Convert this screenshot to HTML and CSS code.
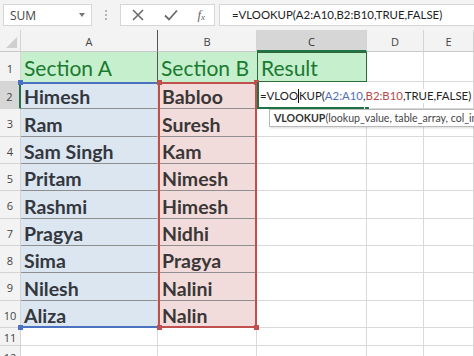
FILE: index.html
```html
<!DOCTYPE html>
<html>
<head>
<meta charset="utf-8">
<link rel="stylesheet" href="styles.css">
</head>
<body>
<div class="app">
  <div class="toolbar">
    <div class="namebox"><span>SUM</span><span class="caret"></span></div>
    <div class="grip"><i></i><i></i><i></i></div>
    <div class="btns">
      <svg width="14" height="14" viewBox="0 0 14 14"><path d="M2 2L12 12M12 2L2 12" stroke="#6a6a6a" stroke-width="1.6" fill="none"/></svg>
      <svg width="16" height="14" viewBox="0 0 16 14"><path d="M2 7.5L6 11.5L14 2.5" stroke="#6a6a6a" stroke-width="1.8" fill="none"/></svg>
      <span class="fx">f<sub>x</sub></span>
    </div>
    <div class="fbar">=VLOOKUP(A2:A10,B2:B10,TRUE,FALSE)</div>
  </div>
  <div class="sheet">
    <div class="corner"><span class="tri"></span></div>
    <div class="ch cha">A</div><div class="ch">B</div><div class="ch ch-sel">C</div><div class="ch">D</div><div class="ch">E</div>

    <div class="rh">1</div>
    <div class="c head ha">Section A</div><div class="c head">Section B</div><div class="c head hc">Result</div><div class="c"></div><div class="c"></div>

    <div class="rh rh-sel">2</div>
    <div class="c a">Himesh</div><div class="c b">Babloo</div><div class="c edit"><span class="etext">=VLOO<span class="cur"></span>KUP(<span class="rb">A2:A10</span>,<span class="rr">B2:B10</span>,TRUE,FALSE)</span><span class="fill"></span><div class="tip"><b>VLOOKUP</b>(lookup_value, table_array, col_index_num, [range_lookup])</div></div><div class="c"></div><div class="c"></div>

    <div class="rh">3</div>
    <div class="c a">Ram</div><div class="c b">Suresh</div><div class="c"></div><div class="c"></div><div class="c"></div>

    <div class="rh">4</div>
    <div class="c a">Sam Singh</div><div class="c b">Kam</div><div class="c"></div><div class="c"></div><div class="c"></div>

    <div class="rh">5</div>
    <div class="c a">Pritam</div><div class="c b">Nimesh</div><div class="c"></div><div class="c"></div><div class="c"></div>

    <div class="rh">6</div>
    <div class="c a">Rashmi</div><div class="c b">Himesh</div><div class="c"></div><div class="c"></div><div class="c"></div>

    <div class="rh">7</div>
    <div class="c a">Pragya</div><div class="c b">Nidhi</div><div class="c"></div><div class="c"></div><div class="c"></div>

    <div class="rh">8</div>
    <div class="c a">Sima</div><div class="c b">Pragya</div><div class="c"></div><div class="c"></div><div class="c"></div>

    <div class="rh">9</div>
    <div class="c a">Nilesh</div><div class="c b">Nalini</div><div class="c"></div><div class="c"></div><div class="c"></div>

    <div class="rh">10</div>
    <div class="c a">Aliza</div><div class="c b">Nalin</div><div class="c"></div><div class="c"></div><div class="c"></div>

    <div class="rh">11</div>
    <div class="c"></div><div class="c"></div><div class="c"></div><div class="c"></div><div class="c"></div>

    <div class="rh rh-last">12</div>
    <div class="c"></div><div class="c"></div><div class="c"></div><div class="c"></div><div class="c"></div>

    <div class="range rng-a"><i class="h tl"></i><i class="h bl"></i></div>
    <div class="range rng-b"><i class="h tl"></i><i class="h tr"></i><i class="h bl"></i><i class="h br"></i></div>
  </div>
</div>
</body>
</html>
```
FILE: styles.css
```css
* { box-sizing: border-box; }
html, body { margin: 0; padding: 0; }
body { width: 474px; height: 356px; overflow: hidden; background: #fff; font-family: Lato, "Open Sans", sans-serif; }
.app { width: 474px; height: 356px; overflow: hidden; }

.toolbar { height: 30px; background: #f3f3f3; display: flex; align-items: flex-start; padding: 4px 0 0 3px; }
.namebox { width: 89px; height: 22px; background: #fff; border: 1px solid #d6d6d6; display: flex; align-items: center; justify-content: space-between; padding: 0 6px 0 6px; font-family: "Open Sans", sans-serif; font-size: 12px; color: #444; }
.caret { width: 0; height: 0; border-left: 3px solid transparent; border-right: 3px solid transparent; border-top: 4px solid #777; }
.grip { width: 28px; height: 22px; display: flex; flex-direction: column; align-items: center; justify-content: center; gap: 2px; }
.grip i { width: 2px; height: 2px; background: #b5b5b5; display: block; }
.btns { width: 95px; height: 22px; background: #fff; border: 1px solid #d6d6d6; display: flex; align-items: center; justify-content: space-between; padding: 0 9px 0 10px; }
.fx { font-family: "Liberation Serif", serif; font-style: italic; font-size: 13px; color: #666; }
.fx sub { font-size: 9px; vertical-align: -1px; }
.fbar { flex: 1; height: 22px; margin-left: 4px; background: #fff; border: 1px solid #d6d6d6; border-right: none; padding-left: 12px; font-family: Lato, sans-serif; font-size: 11.4px; color: #222; line-height: 20px; white-space: nowrap; }

.sheet { position: relative; display: grid; grid-template-columns: 21px 137px 99px 110px 57px 1fr; grid-template-rows: 22px 30px repeat(9, 27.33px) 18px 18px; }
.corner { background: #f3f3f3; border-right: 1px solid #d4d4d4; border-bottom: 1px solid #c8c8c8; position: relative; }
.tri { position: absolute; right: 3px; bottom: 3px; width: 0; height: 0; border-left: 11px solid transparent; border-bottom: 11px solid #cfcfcf; }
.ch { background: #f3f3f3; border-right: 1px solid #d4d4d4; border-bottom: 1px solid #c8c8c8; font-family: "Open Sans", sans-serif; font-size: 11px; color: #444; display: flex; align-items: center; justify-content: center; padding-top: 2px; }
.cha { border-right-color: #555; }
.ch-sel { background: #d6d6d6; color: #333; border-bottom: 2px solid #217346; }
.rh { background: #f3f3f3; border-right: 1px solid #d4d4d4; border-bottom: 1px solid #d4d4d4; font-family: "Open Sans", sans-serif; font-size: 11px; color: #444; display: flex; align-items: center; justify-content: center; padding-top: 3px; }
.rh-sel { background: #d6d6d6; border-right: 2px solid #217346; }
.rh-last { align-items: flex-start; padding-top: 4px; }

.c { border-right: 1px solid #d9d9d9; border-bottom: 1px solid #d9d9d9; white-space: nowrap; display: flex; align-items: flex-end; padding: 0 0 0 3px; position: relative; }
.head { background: #c6efce; color: #1a7a2e; font-size: 21px; padding-bottom: 1px; border-right-color: #c6efce; border-bottom-color: #c6efce; }
.ha { border-right-color: #555; }
.hc { border: 1px solid #2e6b38; }
.a { background: #dce6f1; color: #34383e; font-weight: 700; font-size: 19.5px; border-bottom: 1px solid #8f8f8f; padding-bottom: 0; }
.b { background: #f2dcdb; color: #3b3737; font-weight: 700; font-size: 19.5px; border-bottom: 1px solid #8f8f8f; padding-bottom: 0; padding-left: 4px; }

.edit { border-left: 2px solid #217346; border-bottom: 2px solid #217346; border-right: none; overflow: visible; z-index: 3; padding: 0 0 4px 1px; align-items: flex-end; }
.etext { font-size: 11.4px; color: #222; background: #fff; position: relative; z-index: 3; }
.cur { display: inline-block; width: 1px; height: 14px; background: #111; vertical-align: -3px; }
.rb { color: #4f6fb5; }
.rr { color: #b84848; }
.fill { position: absolute; right: -3px; bottom: -4px; width: 6px; height: 5px; background: #217346; border: 1px solid #fff; z-index: 4; }
.tip { position: absolute; left: 10px; top: 27px; height: 18px; background: #fff; border: 1px solid #b9b9b9; box-shadow: 1px 1px 2px rgba(0,0,0,0.15); padding: 0 4px; font-size: 10.6px; line-height: 16px; color: #444; z-index: 5; white-space: nowrap; }
.tip b { color: #333; }

.range { position: absolute; pointer-events: none; }
.rng-a { left: 21px; top: 52px; width: 138px; height: 246px; border-top: 2px solid #4a72c0; border-bottom: 2px solid #4a72c0; }
.rng-b { left: 158px; top: 52px; width: 99px; height: 246px; border: 2px solid #c0504d; }
.h { position: absolute; width: 5px; height: 5px; display: block; }
.rng-a .h { background: #4a72c0; }
.rng-b .h { background: #c0504d; }
.tl { left: -3px; top: -4px; }
.tr { right: -4px; top: -4px; }
.bl { left: -3px; bottom: -4px; }
.br { right: -4px; bottom: -4px; }
```
